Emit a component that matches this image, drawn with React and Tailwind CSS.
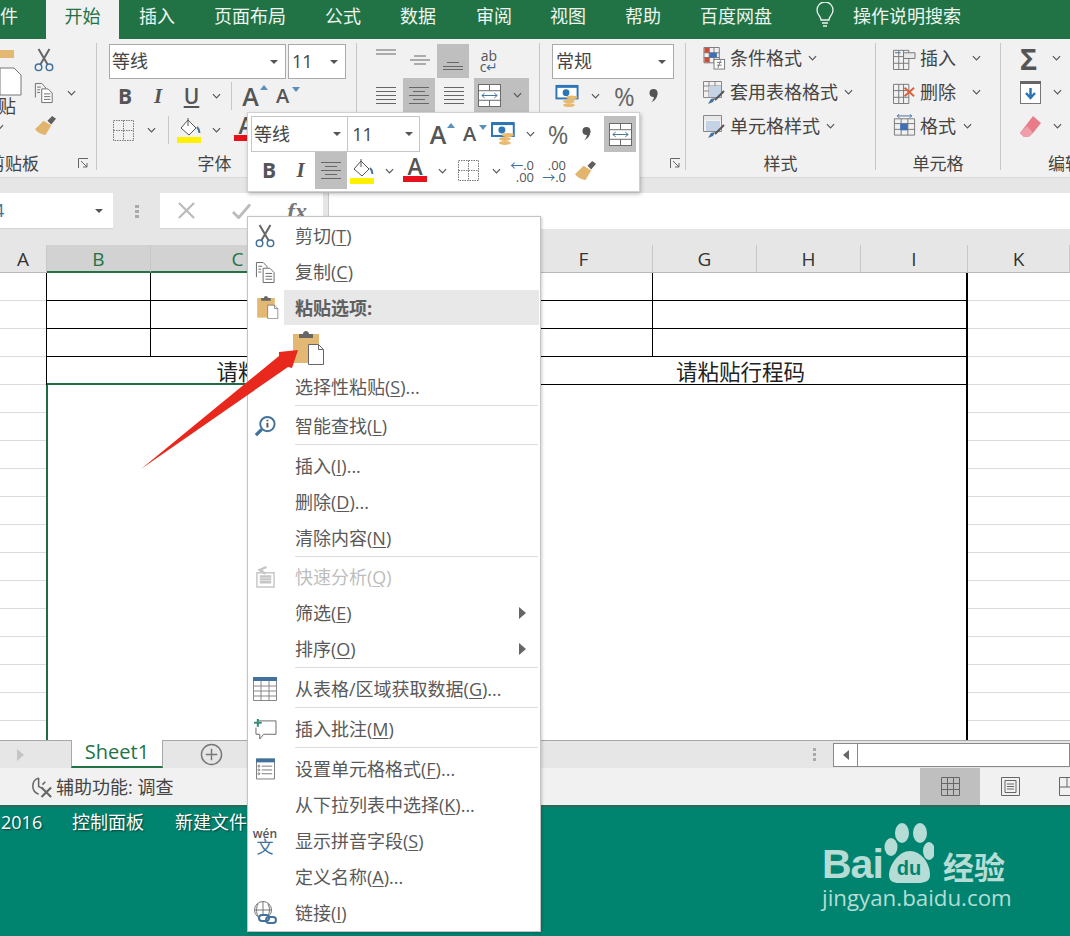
import React from "react";

const F = { fontFamily: '"Open Sans","Noto Sans CJK SC",sans-serif' };

const Chev = ({ c = "" }) => (
  <svg viewBox="0 0 10 6" className={`w-[9px] h-[6px] shrink-0 ${c}`}><path d="M1 1l4 4 4-4" fill="none" stroke="#555" strokeWidth="1.3" /></svg>
);
const Drop = () => <svg viewBox="0 0 8 4" className="w-[8px] h-[4px] shrink-0"><path d="M0 0h8L4 4z" fill="#555" /></svg>;

const Scissors = ({ c }) => (
  <svg viewBox="0 0 22 26" className={c}>
    <path d="M5 1l10 17M17 1L7 18" stroke="#666" strokeWidth="2.2" fill="none" />
    <circle cx="5" cy="21" r="3.6" fill="none" stroke="#41719c" strokeWidth="1.6" />
    <circle cx="17" cy="21" r="3.6" fill="none" stroke="#41719c" strokeWidth="1.6" />
  </svg>
);
const Copy = ({ c }) => (
  <svg viewBox="0 0 22 24" className={c} fill="none" stroke="#666" strokeWidth="1">
    <path d="M1.5 17V1.5h7l4 4V7" />
    <path d="M8.5 7.5h7l4.5 4.5v10.5H8.5z" fill="#fff" />
    <path d="M3.5 5.5h4M3.5 8.5h3M3.5 11.5h3M11 13h7M11 16h7M11 19h7" />
  </svg>
);
const Brush = ({ c }) => (
  <svg viewBox="0 0 24 22" className={c}>
    <path d="M14 6l5-5 4 3-5 6z" fill="#5f5f5f" />
    <path d="M1 15l9-9 8 5-6 10c-3 0-8-2-11-6z" fill="#e2b46e" />
  </svg>
);
const Clip = ({ c }) => (
  <svg viewBox="0 0 32 34" className={c}>
    <rect x="0" y="3" width="26" height="29" fill="#e2b872" />
    <path d="M6 3h4c0-4 6-4 6 0h4v4H6z" fill="#666" />
    <path d="M15.5 13.5h10l5 5v15h-15z" fill="#fff" stroke="#666" />
    <path d="M25.5 13.5v5h5" fill="none" stroke="#666" />
  </svg>
);
const Fill = ({ c }) => (
  <svg viewBox="0 0 24 26" className={c}>
    <path d="M11 3l8 8-7 7-8-7z" fill="#fff" stroke="#555" />
    <path d="M11 1v8" stroke="#555" />
    <path d="M20 10c2 2 2.500 4 2.500 6" stroke="#41719c" strokeWidth="2" fill="none" />
    <rect x="0" y="20" width="24" height="6" fill="#ffef00" />
  </svg>
);
const Borders = ({ c }) => (
  <svg viewBox="0 0 21 21" className={c} fill="none" stroke="#777" strokeDasharray="1.500 1">
    <path d="M.5.5h20v20H.5zM10.500.5v20M.5 10.500h20" />
  </svg>
);
const Lines = ({ c, ys = [2, 6, 10, 14, 18], narrow = [] }) => (
  <svg viewBox={`0 0 22 ${Math.max(...ys) + 3}`} className={c} stroke="#666" fill="none">
    {ys.map((y, i) => <path key={i} d={`M${narrow.includes(i) ? 5 : 1} ${y + 0.5}H${narrow.includes(i) ? 17 : 21}`} />)}
  </svg>
);
const Merge = ({ c }) => (
  <svg viewBox="0 0 24 24" className={c} fill="#fff" stroke="#666">
    <rect x=".5" y=".5" width="23" height="23" />
    <path d="M.5 7h23M.5 17h23M12 .5V7M12 17v6.500" fill="none" />
    <path d="M4 12h16M4 12l3-2.500M4 12l3 2.500M20 12l-3-2.500M20 12l-3 2.500" stroke="#41719c" fill="none" />
  </svg>
);
const Cash = ({ c }) => (
  <svg viewBox="0 0 24 26" className={c}>
    <rect x="1" y="2" width="22" height="13" fill="#fff" stroke="#2e75b6" strokeWidth="2" />
    <path d="M1 1h22v3H1z" fill="#2e75b6" />
    <circle cx="11" cy="9" r="3.500" fill="#2e75b6" />
    <ellipse cx="17" cy="14" rx="6" ry="2" fill="#e9b96e" />
    <ellipse cx="14" cy="18" rx="6" ry="2" fill="#e9b96e" />
    <ellipse cx="14" cy="22" rx="6" ry="2" fill="#e9b96e" />
  </svg>
);
const Comma = ({ c }) => (
  <svg viewBox="0 0 9 14" className={c}><circle cx="4.500" cy="4" r="4" fill="#555" /><path d="M8.500 4c0 5-3 8-6.500 9.500C5 11 5 8 5 6z" fill="#555" /></svg>
);
const Tri = ({ c, down }) => (
  <svg viewBox="0 0 8 5" className={c}><path d={down ? "M0 0h8L4 5z" : "M4 0l4 5H0z"} fill="#5b8fb9" /></svg>
);
const FontA = ({ size, down }) => (
  <span className={`relative flex items-end justify-center font-semibold text-[#555] leading-none ${size}`}>
    A
    <Tri down={down} c="absolute -right-[9px] top-[1px] w-[8px] h-[5px]" />
  </span>
);
const ColorA = () => (
  <span className="flex flex-col items-center w-[24px] leading-none">
    <span className="text-[23px] font-semibold text-[#555] h-[20px] -mt-[5px]">A</span>
    <span className="w-[24px] h-[6px] bg-[#e8101a] mt-[1px]" />
  </span>
);
const Launch = () => (
  <svg viewBox="0 0 11 11" className="w-[11px] h-[11px]" fill="none" stroke="#666"><path d="M.5 10V.5H10M3 3l6 6M9 5v4H5" /></svg>
);
const Sep = () => <div className="w-px h-[127px] mt-[4px] bg-[#c8c8c8] shrink-0" />;
const GridIc = ({ c, children }) => (
  <svg viewBox="0 0 24 24" className={c} fill="none" stroke="#777">
    <path d="M.5 3.500h16v20H.5zM.5 10h16M.5 17h16M6 3.500v20M11 3.500v20" />
    {children}
  </svg>
);
const Label = ({ children }) => <div className="text-[17px] text-[#444] leading-none text-center mt-[13px]">{children}</div>;

const Tab = ({ w, active, children }) => (
  <div className={`h-[39px] flex items-center justify-center shrink-0 pb-[7px] ${w} ${active ? "bg-[#f1f1f1] text-[#217346]" : "text-[#eef5f0]"}`}>{children}</div>
);

function TabBar() {
  return (
    <div className="h-[39px] bg-[#217346] flex text-[18px] leading-none shrink-0">
      <Tab w="w-[16px] justify-start">件</Tab>
      <div className="w-[30px]" />
      <Tab w="w-[73px]" active>开始</Tab>
      <Tab w="w-[76px]">插入</Tab>
      <Tab w="w-[110px]">页面布局</Tab>
      <Tab w="w-[76px]">公式</Tab>
      <Tab w="w-[74px]">数据</Tab>
      <Tab w="w-[78px]">审阅</Tab>
      <Tab w="w-[70px]">视图</Tab>
      <Tab w="w-[80px]">帮助</Tab>
      <Tab w="w-[106px]">百度网盘</Tab>
      <div className="w-[26px]" />
      <div className="h-[39px] flex items-start pt-[2px] w-[38px]">
        <svg viewBox="0 0 20 26" className="w-[20px] h-[26px]" fill="none" stroke="#eef5f0" strokeWidth="1.300">
          <path d="M6 18c0-4-4-5-4-10a8 8 0 0 1 16 0c0 5-4 6-4 10z" />
          <path d="M7 21h6M8 24h4" />
        </svg>
      </div>
      <Tab w="w-[108px]">操作说明搜索</Tab>
    </div>
  );
}

const StyleRow = ({ icon, text, gap }) => (
  <div className="h-[34px] flex items-center text-[18px] text-[#444] leading-none">
    {icon}
    <span className="ml-[4px]">{text}</span>
    <Chev c={gap} />
  </div>
);

function Ribbon() {
  return (
    <div className="h-[138px] bg-[#f1f1f1] flex shrink-0 overflow-hidden text-[#444]">
      {/* clipboard */}
      <div className="w-[96px] shrink-0 flex flex-col">
        <div className="h-[103px] flex pt-[1px]">
          <div className="w-[34px] flex flex-col items-start overflow-hidden">
            <svg viewBox="0 0 22 46" className="w-[22px] h-[46px] mt-[10px]">
              <path d="M0 0h14v8H0z" fill="#e2b872" />
              <path d="M0 18h14l7 7v20H0z" fill="#fff" stroke="#777" />
            </svg>
            <span className="text-[18px] leading-none -ml-[2px] mt-[1px]">贴</span>
            <Chev c="-ml-[5px] mt-[9px]" />
          </div>
          <div className="flex flex-col pt-[4px]">
            <div className="h-[34px] flex items-center"><Scissors c="w-[20px] h-[24px]" /></div>
            <div className="h-[34px] flex items-center"><Copy c="w-[20px] h-[22px]" /><Chev c="ml-[13px]" /></div>
            <div className="h-[34px] flex items-center"><Brush c="w-[23px] h-[21px]" /></div>
          </div>
        </div>
        <div className="flex items-center mt-[13px] h-[17px]">
          <span className="text-[17px] leading-none -ml-[12px] whitespace-nowrap">剪贴板</span>
          <span className="ml-[39px]"><Launch /></span>
        </div>
      </div>
      <Sep />
      {/* font */}
      <div className="w-[259px] shrink-0 flex flex-col pl-[12px]">
        <div className="h-[103px] pt-[5px]">
          <div className="flex gap-[2px] h-[35px]">
            <div className="w-[177px] bg-white border border-[#aaa] flex items-center justify-between pl-[2px] pr-[7px] text-[18px]">等线<Drop /></div>
            <div className="w-[58px] bg-white border border-[#aaa] flex items-center justify-between pl-[3px] pr-[7px] text-[18px]">11<Drop /></div>
          </div>
          <div className="flex items-center h-[34px] text-[#555] leading-none">
            <span className="w-[32px] text-center text-[21px] font-bold">B</span>
            <span className="w-[34px] text-center text-[21px] font-bold italic" style={{ fontFamily: "Liberation Serif" }}>I</span>
            <span className="w-[33px] text-center text-[21px] font-semibold underline">U</span>
            <Chev c="ml-[4px]" />
            <span className="w-px h-[28px] bg-[#c8c8c8] ml-[10px] mr-[10px]" />
            <FontA size="text-[25px] w-[17px]" />
            <span className="w-[15px]" />
            <FontA size="text-[20px] w-[17px]" down />
          </div>
          <div className="flex items-center h-[34px]">
            <Borders c="w-[21px] h-[21px] ml-[4px]" />
            <Chev c="ml-[13px]" />
            <span className="w-px h-[28px] bg-[#c8c8c8] ml-[12px] mr-[8px]" />
            <Fill c="w-[24px] h-[26px]" />
            <Chev c="ml-[11px] mr-[13px]" />
            <ColorA />
          </div>
        </div>
        <Label><span className="-ml-[36px] block">字体</span></Label>
      </div>
      <Sep />
      {/* alignment */}
      <div className="w-[182px] shrink-0 pl-[12px] pt-[4px]">
        <div className="flex h-[35px] items-center">
          <span className="w-[34px] h-[33px] flex justify-center items-start pt-[4px]"><Lines c="w-[22px] h-[9px]" ys={[1, 5]} /></span>
          <span className="w-[34px] h-[33px] flex justify-center items-start pt-[10px]"><Lines c="w-[22px] h-[13px]" ys={[1, 5, 9]} narrow={[0, 2]} /></span>
          <span className="w-[32px] h-[34px] bg-[#bfbfbf] flex justify-center items-end pb-[6px]"><Lines c="w-[22px] h-[11px]" ys={[1, 5, 8]} narrow={[0]} /></span>
          <span className="w-[36px] ml-[2px] text-[14px] leading-[11px] text-center text-[#555]">ab<br />c<span className="text-[#41719c]">↵</span></span>
        </div>
        <div className="flex h-[34px]">
          <span className="w-[34px] flex justify-center items-center"><Lines c="w-[22px] h-[21px]" /></span>
          <span className="w-[32px] bg-[#bfbfbf] flex justify-center items-center mr-[2px]"><Lines c="w-[22px] h-[21px]" narrow={[1, 3]} /></span>
          <span className="w-[34px] flex justify-center items-center"><Lines c="w-[22px] h-[21px]" /></span>
          <span className="w-[3px]" />
          <span className="w-[55px] bg-[#bfbfbf] flex items-center pl-[4px]">
            <Merge c="w-[23px] h-[23px]" /><Chev c="ml-[12px]" />
          </span>
        </div>
      </div>
      <Sep />
      {/* number */}
      <div className="w-[145px] shrink-0 pl-[12px] flex flex-col">
        <div className="h-[103px] pt-[5px]">
          <div className="w-[122px] h-[35px] bg-white border border-[#aaa] flex items-center justify-between pl-[3px] pr-[7px] text-[18px]">常规<Drop /></div>
          <div className="flex items-center h-[34px]">
            <Cash c="w-[24px] h-[25px] ml-[3px]" />
            <Chev c="ml-[12px]" />
            <span className="ml-[14px] text-[25px] leading-none text-[#666]">%</span>
            <Comma c="ml-[14px] w-[9px] h-[14px]" />
          </div>
        </div>
        <div className="pl-[118px] mt-[13px] h-[17px] flex items-center"><Launch /></div>
      </div>
      <Sep />
      {/* styles */}
      <div className="w-[189px] shrink-0 flex flex-col pl-[17px]">
        <div className="h-[103px] pt-[2px]">
          <StyleRow gap="ml-[6px]" text="条件格式" icon={
            <svg viewBox="0 0 23 24" className="w-[23px] h-[23px]" fill="none" stroke="#777"><path d="M.5.5h16v16H.5zM.5 6h16M.5 11h16M6 .5v16M11 .5v16" /><rect x="1" y="1" width="5" height="5" fill="#c8503a" stroke="none" /><rect x="6" y="6" width="8" height="5" fill="#3f6fb5" stroke="none" /><rect x="1" y="11" width="5" height="5" fill="#c8503a" stroke="none" /><rect x="11" y="13" width="11" height="10" fill="#fff" /><path d="M14 16h5M14 19h5M18 14l-3 8" /></svg>} />
          <StyleRow gap="ml-[6px]" text="套用表格格式" icon={
            <svg viewBox="0 0 23 23" className="w-[23px] h-[23px]" fill="none" stroke="#888"><path d="M.5.5h18v16H.5zM.5 5h18M.5 10h18M6 .5v16M12 .5v16" /><rect x="6" y="5" width="12" height="11" fill="#c4d3e6" stroke="none" /><path d="M21 10l-9 9" stroke="#555" strokeWidth="2" /><path d="M8 18l4-1-2 4-5 2z" fill="#41719c" stroke="none" /></svg>} />
          <StyleRow gap="ml-[6px]" text="单元格样式" icon={
            <svg viewBox="0 0 23 23" className="w-[23px] h-[23px]" fill="none" stroke="#888"><path d="M.5.5h18v16H.5z" /><rect x="1" y="1" width="17" height="4" fill="#e8e8e8" stroke="none" /><rect x="3" y="6" width="14" height="10" fill="#c4d3e6" stroke="none" /><path d="M21 10l-9 9" stroke="#555" strokeWidth="2" /><path d="M8 18l4-1-2 4-5 2z" fill="#41719c" stroke="none" /></svg>} />
        </div>
        <Label><span className="-ml-[17px] block">样式</span></Label>
      </div>
      <Sep />
      {/* cells */}
      <div className="w-[124px] shrink-0 flex flex-col pl-[17px]">
        <div className="h-[103px] pt-[2px]">
          <div className="h-[34px] flex items-center text-[18px] leading-none">
            <GridIc c="w-[23px] h-[23px]"><path d="M11 6h12v6H11z" fill="#e8e8e8" /><path d="M2 6h6" stroke="#41719c" /></GridIc>
            <span className="ml-[4px]">插入</span><Chev c="ml-[16px]" />
          </div>
          <div className="h-[34px] flex items-center text-[18px] leading-none">
            <GridIc c="w-[23px] h-[23px]"><path d="M12 7l10 9M22 7l-10 9" stroke="#d9603b" strokeWidth="2" /></GridIc>
            <span className="ml-[4px]">删除</span><Chev c="ml-[16px]" />
          </div>
          <div className="h-[34px] flex items-center text-[18px] leading-none">
            <svg viewBox="0 0 23 25" className="w-[23px] h-[24px]" fill="none" stroke="#777"><path d="M1 5h21v17H1zM1 10h21M1 16h21M8 5v17M15 5v17" /><rect x="7" y="10" width="8" height="7" fill="#3f6fb5" stroke="none" /><path d="M4 2h15M4 2l2-2M4 2l2 2M19 2l-2-2M19 2l-2 2" stroke="#41719c" /></svg>
            <span className="ml-[4px]">格式</span><Chev c="ml-[7px]" />
          </div>
        </div>
        <Label><span className="-ml-[17px] block">单元格</span></Label>
      </div>
      <Sep />
      {/* edit */}
      <div className="flex-1 flex flex-col pl-[19px] overflow-hidden">
        <div className="h-[103px] pt-[2px]">
          <div className="h-[34px] flex items-center">
            <span className="text-[29px] leading-none font-bold text-[#555] w-[20px]">Σ</span><Chev c="ml-[12px]" />
          </div>
          <div className="h-[34px] flex items-center">
            <svg viewBox="0 0 21 23" className="w-[21px] h-[23px]"><rect x=".5" y=".5" width="20" height="22" fill="#fff" stroke="#777" /><rect width="21" height="3" fill="#666" /><path d="M10.500 7v10M6 12l4.500 5 4.500-5" fill="none" stroke="#2e75b6" strokeWidth="2.500" /></svg>
            <Chev c="ml-[12px]" />
          </div>
          <div className="h-[34px] flex items-center">
            <svg viewBox="0 0 21 21" className="w-[21px] h-[21px]"><path d="M13 0l8 7-8 10-5 4H4l-4-4z" fill="#ea7c8a" /><path d="M0 17l7-7 6 7-4 4H4z" fill="#eea0aa" /></svg>
            <Chev c="ml-[12px]" />
          </div>
        </div>
        <Label><span className="block text-left ml-[28px] whitespace-nowrap">编辑</span></Label>
      </div>
    </div>
  );
}

function FormulaBar() {
  return (
    <div className="flex flex-col shrink-0">
      <div className="h-[16px] bg-[#e6e6e6] border-t border-[#d9d9d9]" />
      <div className="h-[36px] bg-[#e6e6e6] flex">
        <div className="w-[113px] bg-white border-b border-[#d4d4d4] flex items-center justify-between pr-[10px] text-[18px] text-[#41719c]">
          <span className="-ml-[6px]">4</span><Drop />
        </div>
        <div className="w-[47px] flex flex-col items-center justify-center gap-[2px]">
          <span className="w-[4px] h-[3px] bg-[#aaa]" /><span className="w-[4px] h-[3px] bg-[#aaa]" /><span className="w-[4px] h-[3px] bg-[#aaa]" />
        </div>
        <div className="w-[163px] bg-white flex items-center border-b border-[#d4d4d4]">
          <svg viewBox="0 0 18 18" className="w-[17px] h-[17px] ml-[18px]"><path d="M1 1l16 16M17 1L1 17" stroke="#bbb" strokeWidth="2.400" /></svg>
          <svg viewBox="0 0 20 16" className="w-[19px] h-[16px] ml-[37px]"><path d="M1 9l6 6L19 1" stroke="#bbb" strokeWidth="3" fill="none" /></svg>
          <span className="ml-[36px] text-[24px] italic font-bold text-[#777] leading-none" style={{ fontFamily: "Liberation Serif" }}>fx</span>
        </div>
        <div className="w-[5px]" />
        <div className="flex-1 bg-white border-l border-[#c8c8c8]" />
      </div>
      <div className="h-[16px] bg-[#e6e6e6]" />
    </div>
  );
}

const Col = ({ w, sel, children }) => (
  <div className={`h-[28px] shrink-0 flex items-start justify-center text-[19px] leading-[28px] border-r border-[#c8c8c8] ${w} ${sel ? "bg-[#d2d2d2] text-[#217346] border-b-2 border-b-[#217346]" : "text-[#333] border-b border-b-[#b8b8b8]"}`}>{children}</div>
);

function Sheet() {
  const rows = Array.from({ length: 17 }, (_, i) => i);
  const Side = ({ w }) => (
    <div className={`shrink-0 overflow-hidden ${w}`}>
      {rows.map((r) => <div key={r} className="h-[28px] border-b border-[#dcdcdc]" />)}
    </div>
  );
  const Cells = () => (
    <div className="h-[28px] flex border-b border-black">
      <div className="w-[104px] border-r border-black" />
      <div className="w-[502px] border-r border-black" />
      <div className="flex-1" />
    </div>
  );
  return (
    <>
      <div className="h-[28px] flex bg-[#e6e6e6] shrink-0">
        <Col w="w-[47px]">A</Col>
        <Col w="w-[104px]" sel>B</Col>
        <Col w="w-[174px]" sel>C</Col>
        <Col w="w-[190px]">D</Col>
        <Col w="w-[138px]">F</Col>
        <Col w="w-[104px]">G</Col>
        <Col w="w-[104px]">H</Col>
        <Col w="w-[107px]">I</Col>
        <Col w="flex-1">K</Col>
      </div>
      <div className="h-[467px] flex overflow-hidden shrink-0 bg-white">
        <Side w="w-[46px]" />
        <div className="w-[922px] shrink-0 flex flex-col border-r-2 border-black border-l border-l-black">
          <Cells />
          <Cells />
          <Cells />
          <div className="h-[28px] flex text-[21.500px] leading-[30px] text-[#222] text-center">
            <div className="w-[468px] border-b-2 border-[#1f6b45]">请粘贴行程码</div>
            <div className="flex-1 border-b border-black">请粘贴行程码</div>
          </div>
          <div className="flex-1 -ml-px border-l-2 border-[#1f6b45]" />
        </div>
        <Side w="flex-1" />
      </div>
    </>
  );
}

function Bottom() {
  return (
    <>
      <div className="h-[28px] bg-[#e6e6e6] border-t border-[#a8a8a8] flex items-center shrink-0">
        <svg viewBox="0 0 7 12" className="w-[7px] h-[12px] ml-[17px]"><path d="M0 0l7 6-7 6z" fill="#c4c4c4" /></svg>
        <div className="ml-[47px] w-[92px] h-[28px] -mt-px bg-white border-x border-[#a8a8a8] border-b-2 border-b-[#217346] text-[20px] leading-[23px] text-center text-[#217346]">Sheet1</div>
        <svg viewBox="0 0 24 24" className="w-[23px] h-[23px] ml-[37px]" fill="none" stroke="#777" strokeWidth="1.500"><circle cx="12" cy="12" r="10.500" /><path d="M12 6v12M6 12h12" /></svg>
        <div className="flex flex-col gap-[2px] ml-[590px]">
          <span className="w-[3px] h-[3px] bg-[#aaa]" /><span className="w-[3px] h-[3px] bg-[#aaa]" /><span className="w-[3px] h-[3px] bg-[#aaa]" />
        </div>
        <div className="ml-[17px] h-[24px] flex-1 bg-white border border-[#8a8a8a] flex">
          <div className="w-[24px] border-r border-[#8a8a8a] flex items-center justify-center">
            <svg viewBox="0 0 6 10" className="w-[6px] h-[10px]"><path d="M6 0L0 5l6 5z" fill="#666" /></svg>
          </div>
        </div>
      </div>
      <div className="h-[37px] bg-[#f1f1f1] flex items-center shrink-0 overflow-hidden text-[18px] text-[#444]">
        <svg viewBox="0 0 24 24" className="w-[23px] h-[23px] ml-[30px] shrink-0" fill="none" stroke="#666" strokeWidth="1.600">
          <path d="M9 3a9 9 0 0 0 0 17M9 3v9l4 2M16 7l-3 3" />
          <path d="M12 13l10 10M22 13L12 23" strokeWidth="2.200" />
        </svg>
        <span className="ml-[3px] w-[864px] pt-[2px] shrink-0">辅助功能: 调查</span>
        <div className="w-[60px] h-[37px] bg-[#bfbfbf] flex items-center justify-center shrink-0">
          <svg viewBox="0 0 19 19" className="w-[19px] h-[19px]" fill="none" stroke="#666"><path d="M.5.5h18v18H.5zM6.500.5v18M12.500.5v18M.5 6.500h18M.5 12.500h18" /></svg>
        </div>
        <div className="w-[60px] flex items-center justify-center shrink-0">
          <svg viewBox="0 0 19 19" className="w-[19px] h-[19px]" fill="none" stroke="#666"><path d="M.5.5h18v18H.5zM4 3.500h11v12H4zM6 7h7M6 9.500h7M6 12h7" /></svg>
        </div>
        <svg viewBox="0 0 19 19" className="w-[19px] h-[19px] ml-[19px] shrink-0" fill="none" stroke="#666"><path d="M.5.5h18v18H.5zM.5 10h18M8 .5V10" /></svg>
      </div>
      <div className="flex-1 bg-[#008470] border-t-2 border-[#2b6b55] text-[18px] text-white flex items-start pt-[3px] leading-[24px]" style={{ textShadow: "1px 1px 2px rgba(0,0,0,.55)" }}>
        <span className="w-[72px] pl-[1px]">2016</span>
        <span className="w-[103px]">控制面板</span>
        <span>新建文件</span>
      </div>
    </>
  );
}

function MiniToolbar() {
  return (
    <div className="absolute left-[247px] top-[112px] w-[393px] h-[80px] bg-white border border-[#d0d0d0] shadow-[1px_2px_4px_rgba(0,0,0,.25)] text-[#444] px-[3px] pt-[3px]">
      <div className="flex h-[36px] items-center">
        <div className="w-[98px] h-[36px] border border-[#c6c6c6] flex items-center justify-between pl-[2px] pr-[6px] text-[18px]">等线<Drop /></div>
        <div className="w-[72px] h-[36px] border border-[#c6c6c6] border-l-0 flex items-center justify-between pl-[4px] pr-[6px] text-[18px]">11<Drop /></div>
        <span className="w-[10px]" />
        <FontA size="text-[25px] w-[17px]" />
        <span className="w-[15px]" />
        <FontA size="text-[20px] w-[17px]" down />
        <span className="w-[13px]" />
        <Cash c="w-[24px] h-[26px]" />
        <Chev c="ml-[11px]" />
        <span className="ml-[13px] text-[25px] leading-none text-[#666]">%</span>
        <Comma c="ml-[14px] w-[9px] h-[14px]" />
        <span className="ml-[13px] w-[32px] h-[36px] bg-[#bfbfbf] flex items-center justify-center"><Merge c="w-[23px] h-[23px]" /></span>
      </div>
      <div className="flex h-[37px] items-center text-[#555]">
        <span className="w-[36px] text-center text-[21px] font-bold leading-none">B</span>
        <span className="w-[27px] text-center text-[21px] font-bold italic leading-none" style={{ fontFamily: "Liberation Serif" }}>I</span>
        <span className="w-[32px] h-[37px] bg-[#bfbfbf] flex items-center justify-center ml-[1px]"><Lines c="w-[22px] h-[21px]" narrow={[1, 3]} /></span>
        <Fill c="w-[24px] h-[26px] ml-[3px]" />
        <Chev c="ml-[11px]" />
        <span className="w-[9px]" />
        <ColorA />
        <Chev c="ml-[11px]" />
        <Borders c="w-[21px] h-[21px] ml-[11px]" />
        <Chev c="ml-[13px]" />
        <span className="ml-[9px] w-[24px] text-[13px] leading-[12px] text-right text-[#555]"><span className="text-[#41719c]">←</span>.0<br />.00</span>
        <span className="ml-[8px] w-[24px] text-[13px] leading-[12px] text-right text-[#555]">.00<br /><span className="text-[#41719c]">→</span>.0</span>
        <Brush c="w-[23px] h-[21px] ml-[8px]" />
      </div>
    </div>
  );
}

const MI = ({ icon, t, k, s, arrow, off }) => (
  <div className={`h-[36px] flex items-center ${off ? "text-[#bdbdbd]" : "text-[#595959]"}`}>
    <span className="w-[34px] mr-[13px] flex justify-center shrink-0">{icon}</span>
    <span>{t}(<u className="underline-offset-2">{k}</u>){s}</span>
    {arrow && <svg viewBox="0 0 7 12" className="w-[7px] h-[12px] ml-auto mr-[14px]"><path d="M0 0l7 6-7 6z" fill="#666" /></svg>}
  </div>
);
const MS = ({ h }) => <div className={`ml-[47px] mr-[2px] ${h}`}><div className="h-px bg-[#dcdcdc]" /></div>;

function Menu() {
  return (
    <div className="absolute left-[247px] top-[216px] w-[294px] h-[716px] bg-white border border-[#c4c4c4] pt-[1px] text-[18px] leading-none shadow-[1px_1px_3px_rgba(0,0,0,.2)]">
      <MI icon={<Scissors c="w-[20px] h-[24px]" />} t="剪切" k="T" />
      <MI icon={<Copy c="w-[21px] h-[23px]" />} t="复制" k="C" />
      <div className="h-[35px] flex items-center">
        <span className="w-[36px] flex justify-center pl-[3px]"><Clip c="w-[22px] h-[23px]" /></span>
        <span className="flex-1 h-[35px] bg-[#e8e8e8] mr-[1px] pl-[11px] flex items-center font-bold text-[#5f5f5f]">粘贴选项:</span>
      </div>
      <div className="h-[44px] pl-[45px] pt-[6px]"><Clip c="w-[32px] h-[34px]" /></div>
      <MI t="选择性粘贴" k="S" s="..." />
      <MS h="h-[3px]" />
      <MI icon={
        <svg viewBox="0 0 24 24" className="w-[23px] h-[23px]" fill="none"><circle cx="14" cy="9.500" r="7.500" stroke="#41719c" strokeWidth="2" /><path d="M8 15l-6 6" stroke="#41719c" strokeWidth="3.500" /><path d="M14 8v5M14 5v1.500" stroke="#555" strokeWidth="2" /></svg>} t="智能查找" k="L" />
      <MS h="h-[4px]" />
      <MI t="插入" k="I" s="..." />
      <MI t="删除" k="D" s="..." />
      <MI t="清除内容" k="N" />
      <MS h="h-[3px]" />
      <MI off t="快速分析" k="Q" icon={
        <svg viewBox="0 0 22 24" className="w-[21px] h-[23px]" fill="none" stroke="#c6c6c6" strokeWidth="1.500"><path d="M2 7h18v15H2z" /><path d="M5 11h12M5 14h12M5 17h12" strokeWidth="2.500" /><path d="M12 1L5 4l6 4" strokeWidth="2.500" /></svg>} />
      <MI t="筛选" k="E" arrow />
      <MI t="排序" k="O" arrow />
      <MS h="h-[4px]" />
      <MI t="从表格/区域获取数据" k="G" s="..." icon={
        <svg viewBox="0 0 24 24" className="w-[24px] h-[24px]" fill="none" stroke="#888"><path d="M.5.5h23v23H.5zM.5 9h23M.5 14h23M.5 19h23M8 4v20M16 4v20" /><rect width="24" height="4" fill="#41719c" stroke="none" /></svg>} />
      <MS h="h-[4px]" />
      <MI t="插入批注" k="M" icon={
        <svg viewBox="0 0 24 22" className="w-[23px] h-[21px]" fill="none" stroke="#666"><path d="M5 2h18v14H10l-4 5v-5H2V9" /><path d="M4 0v8M0 4h8" stroke="#3d8b7a" strokeWidth="2.200" /></svg>} />
      <MS h="h-[4px]" />
      <MI t="设置单元格格式" k="F" s="..." icon={
        <svg viewBox="0 0 20 22" className="w-[19px] h-[22px]" fill="none" stroke="#777"><path d="M.5.5h19v21H.5z" /><rect width="20" height="4" fill="#41719c" stroke="none" /><path d="M6 8h11M6 12h11M6 16h11" /><circle cx="3" cy="8" r="1" /><circle cx="3" cy="12" r="1" /><circle cx="3" cy="16" r="1" /></svg>} />
      <MI t="从下拉列表中选择" k="K" s="..." />
      <MI t="显示拼音字段" k="S" icon={
        <span className="flex flex-col items-center text-[12px] leading-[11px] text-[#555] font-semibold">wén<span className="text-[17px] leading-[16px] font-normal text-[#41719c]">文</span></span>} />
      <MI t="定义名称" k="A" s="..." />
      <MI t="链接" k="I" icon={
        <svg viewBox="0 0 24 24" className="w-[24px] h-[24px]" fill="none"><circle cx="10" cy="9" r="8.500" stroke="#777" /><path d="M1.500 9h17M10 .5v17M5 3c-2 4-2 8 0 12M15 3c2 4 2 8 0 12" stroke="#777" /><rect x="6" y="14" width="10" height="6" rx="3" stroke="#41719c" strokeWidth="2" fill="#fff" /><rect x="13" y="16" width="10" height="6" rx="3" stroke="#41719c" strokeWidth="2" /></svg>} />
    </div>
  );
}

const Arrow = () => (
  <svg viewBox="0 0 170 130" className="absolute left-[138px] top-[345px] w-[170px] h-[130px]">
    <path d="M3 124L141 11 141 7 160 5 154 23 150 22Z" fill="#e8281c" />
  </svg>
);

const Logo = () => (
  <div className="absolute left-[822px] top-[822px] w-[192px] text-[#b6dcd6]">
    <div className="flex items-end h-[62px]">
      <span className="text-[41px] leading-[40px] font-bold w-[62px] tracking-[-1px]" style={{ fontFamily: "Liberation Sans" }}>Bai</span>
      <svg viewBox="0 0 50 62" className="w-[50px] h-[62px] shrink-0" fill="#b6dcd6">
        <ellipse cx="18" cy="11" rx="7" ry="10" />
        <ellipse cx="36" cy="11" rx="7" ry="10" />
        <ellipse cx="7" cy="25" rx="6.500" ry="9" />
        <ellipse cx="45" cy="29" rx="6" ry="9" />
        <path d="M5 53c0-10 10-24 21-24s20 12 20 24c0 6-5 8-12 8H15C9 61 5 59 5 53z" />
        <text x="25" y="53" textAnchor="middle" fontSize="20" fontWeight="700" fill="#008470" fontFamily="Liberation Sans">du</text>
      </svg>
      <span className="ml-[9px] text-[31px] leading-[36px] font-bold whitespace-nowrap" style={{ fontFamily: '"Noto Sans CJK SC"' }}>经验</span>
    </div>
    <div className="text-[22.300px] leading-[26px] mt-[1px] whitespace-nowrap" style={{ fontFamily: "Open Sans" }}>jingyan.baidu.com</div>
  </div>
);

export default function App() {
  return (
    <div className="relative w-[1070px] h-[936px] overflow-hidden flex flex-col bg-white" style={F}>
      <TabBar />
      <Ribbon />
      <FormulaBar />
      <Sheet />
      <Bottom />
      <MiniToolbar />
      <Menu />
      <Arrow />
      <Logo />
    </div>
  );
}
